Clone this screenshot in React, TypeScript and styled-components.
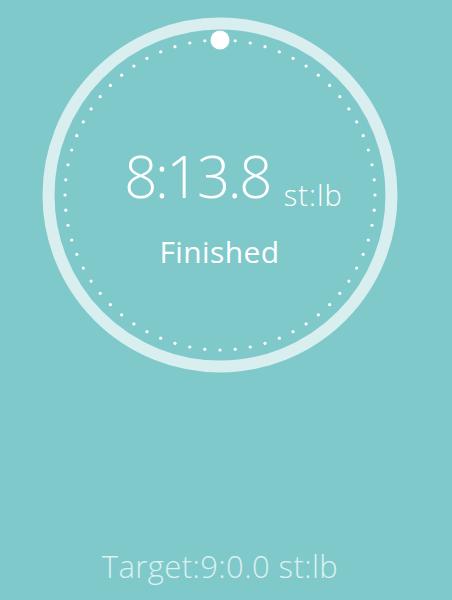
import React from 'react'
import styled, { createGlobalStyle } from 'styled-components'

const GlobalStyle = createGlobalStyle`
  html, body {
    margin: 0;
    padding: 0;
    background: #7fc9ca;
  }
`

const Screen = styled.div`
  width: 452px;
  height: 600px;
  display: flex;
  flex-direction: column;
  align-items: center;
  justify-content: space-between;
  background: #7fc9ca;
  font-family: 'Open Sans', 'Noto Sans', sans-serif;
  color: #ffffff;
  overflow: hidden;
`

const Dial = styled.div`
  position: relative;
  width: 356px;
  height: 356px;
  margin-top: 17px;
  margin-left: -13px;
  display: flex;
  flex-direction: column;
  align-items: center;
  justify-content: center;
`

const DialArt = styled.svg`
  position: absolute;
  inset: 0;
`

const Reading = styled.div`
  position: relative;
  display: flex;
  align-items: baseline;
  margin-top: 28px;
  margin-left: 28px;
`

const Value = styled.span`
  font-size: 58px;
  font-weight: 300;
  letter-spacing: -2.4px;
  line-height: 1;
`

const Unit = styled.span`
  font-size: 29px;
  font-weight: 300;
  letter-spacing: 1px;
  margin-left: 14px;
  position: relative;
  top: 8px;
`

const Status = styled.div`
  position: relative;
  font-size: 30px;
  font-weight: 400;
  letter-spacing: 0.4px;
  margin-top: 25px;
`

const Target = styled.div`
  font-size: 31px;
  font-weight: 300;
  color: #dcf0f0;
  margin-bottom: 13px;
  margin-right: 12px;
  letter-spacing: 0.4px;
`

const DOTS = 64

const DialDrawing: React.FC = () => {
  const c = 178
  const r = 155
  const dots = []
  for (let i = 1; i < DOTS; i++) {
    const a = (i / DOTS) * Math.PI * 2
    dots.push(<circle key={i} cx={c + r * Math.sin(a)} cy={c - r * Math.cos(a)} r={1.6} fill="#ffffff" />)
  }
  return (
    <DialArt width="356" height="356" viewBox="0 0 356 356">
      <circle cx={c} cy={c} r={171.5} fill="none" stroke="#d9eeef" strokeWidth={12} />
      {dots}
      <circle cx={c} cy={c - r} r={9.5} fill="#ffffff" />
    </DialArt>
  )
}

const App: React.FC = () => (
  <Screen>
    <GlobalStyle />
    <Dial>
      <DialDrawing />
      <Reading>
        <Value>8:13.8</Value>
        <Unit>st:lb</Unit>
      </Reading>
      <Status>Finished</Status>
    </Dial>
    <Target>Target:9:0.0 st:lb</Target>
  </Screen>
)

export default App
